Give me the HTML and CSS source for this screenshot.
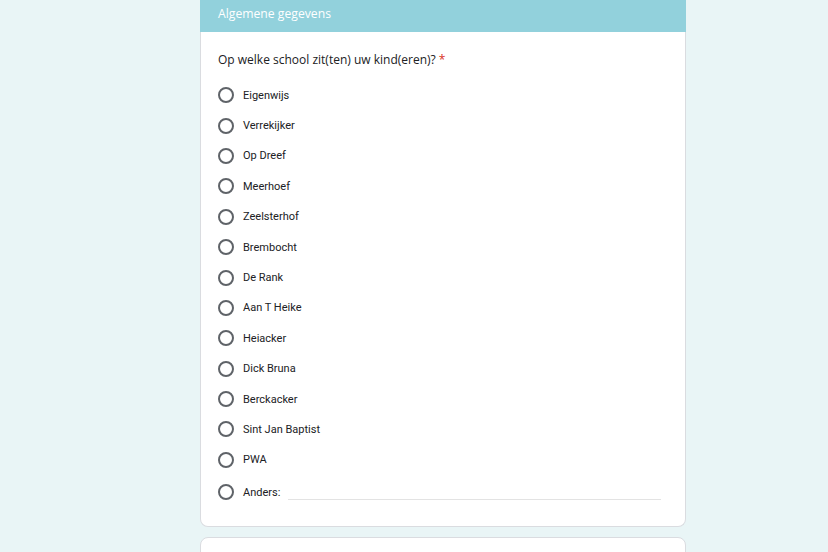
FILE: index.html
```html
<!DOCTYPE html>
<html>
<head>
<meta charset="utf-8">
<link rel="stylesheet" href="styles.css">
</head>
<body>
<div class="page">
  <div class="card">
    <div class="card-header">Algemene gegevens</div>
    <div class="card-body">
      <div class="question">Op welke school zit(ten) uw kind(eren)? <span class="req">*</span></div>
      <div class="options">
        <div class="opt"><span class="radio"></span><span class="label">Eigenwijs</span></div>
        <div class="opt"><span class="radio"></span><span class="label">Verrekijker</span></div>
        <div class="opt"><span class="radio"></span><span class="label">Op Dreef</span></div>
        <div class="opt"><span class="radio"></span><span class="label">Meerhoef</span></div>
        <div class="opt"><span class="radio"></span><span class="label">Zeelsterhof</span></div>
        <div class="opt"><span class="radio"></span><span class="label">Brembocht</span></div>
        <div class="opt"><span class="radio"></span><span class="label">De Rank</span></div>
        <div class="opt"><span class="radio"></span><span class="label">Aan T Heike</span></div>
        <div class="opt"><span class="radio"></span><span class="label">Heiacker</span></div>
        <div class="opt"><span class="radio"></span><span class="label">Dick Bruna</span></div>
        <div class="opt"><span class="radio"></span><span class="label">Berckacker</span></div>
        <div class="opt"><span class="radio"></span><span class="label">Sint Jan Baptist</span></div>
        <div class="opt"><span class="radio"></span><span class="label">PWA</span></div>
        <div class="opt other"><span class="radio"></span><span class="label">Anders:</span><span class="other-input"></span></div>
      </div>
    </div>
  </div>
  <div class="card next"></div>
</div>
</body>
</html>
```
FILE: styles.css
```css
html, body {
  margin: 0;
  padding: 0;
  background: #e9f5f6;
  height: 552px;
  overflow: hidden;
}
.page {
  padding-left: 200px;
  width: 486px;
  display: flex;
  flex-direction: column;
  gap: 10px;
}
.card {
  background: #fff;
  border: 1px solid #dadce0;
  border-top: none;
  border-radius: 0 0 8px 8px;
  box-sizing: border-box;
  width: 486px;
}
.card-header {
  background: #92d1dc;
  color: #fff;
  font-family: "Open Sans", sans-serif;
  font-size: 12.2px;
  height: 32px;
  line-height: 28px;
  padding-left: 18px;
  margin: 0 -1px;
}
.card-body {
  padding: 19px 24px 18px 17px;
}
.question {
  font-family: "Open Sans", sans-serif;
  font-size: 12px;
  color: #202124;
  line-height: 18px;
  margin-bottom: 11px;
}
.req { color: #d93025; }
.options {
  display: flex;
  flex-direction: column;
}
.opt {
  display: flex;
  align-items: center;
  height: 30.4px;
  font-family: Roboto, sans-serif;
  font-size: 11px;
  color: #202124;
}
.radio {
  width: 12px;
  height: 12px;
  border: 2px solid #5f6368;
  border-radius: 50%;
  margin-right: 9px;
  flex: none;
}
.opt.other {
  height: 32px;
  margin-top: 1px;
}
.other-input {
  flex: 1;
  margin-left: 8px;
  height: 16px;
  box-sizing: border-box;
  border-bottom: 1px solid #e3e3e3;
}
.card.next {
  border-top: 1px solid #dadce0;
  border-radius: 8px 8px 0 0;
  height: 40px;
}
```
